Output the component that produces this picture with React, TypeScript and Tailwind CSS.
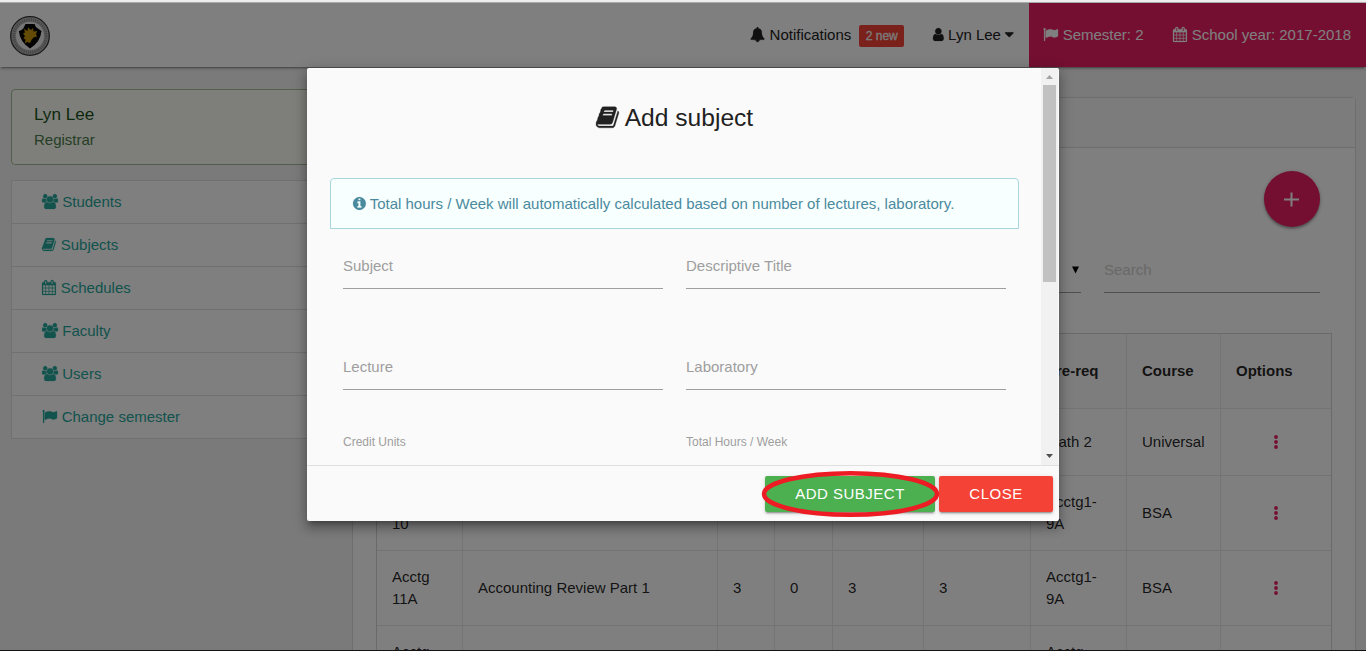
import type { ReactNode } from "react";

type IconName = "users" | "book" | "calendar" | "flag" | "user" | "bell" | "info" | "caret";

const ICONS: Record<IconName, { box: string; width: string; d: string }> = {
  users: {
    box: "0 0 1920 1792",
    width: "w-[1.0714em]",
    d: "M593 896q-162 5-265 128h-134q-82 0-138-40.5t-56-118.5q0-353 124-353 6 0 43.5 21t97.5 42.5 119 21.5q67 0 133-23-5 37-5 66 0 139 81 256zm1071 637q0 120-73 189.5t-194 69.5h-874q-121 0-194-69.5t-73-189.5q0-53 3.5-103.5t14-109 26.5-108.5 43-97.5 62-81 85.5-53.5 111.5-20q10 0 43 21.5t73 48 107 48 135 21.5 135-21.5 107-48 73-48 43-21.5q61 0 111.5 20t85.5 53.5 62 81 43 97.5 26.5 108.5 14 109 3.5 103.5zm-1024-1277q0 106-75 181t-181 75-181-75-75-181 75-181 181-75 181 75 75 181zm704 384q0 159-112.5 271.5t-271.5 112.5-271.5-112.5-112.5-271.5 112.5-271.5 271.5-112.5 271.5 112.5 112.5 271.5zm576 225q0 78-56 118.5t-138 40.5h-134q-103-123-265-128 81-117 81-256 0-29-5-66 66 23 133 23 59 0 119-21.5t97.5-42.5 43.5-21q124 0 124 353zm-128-609q0 106-75 181t-181 75-181-75-75-181 75-181 181-75 181 75 75 181z",
  },
  book: {
    box: "64 0 1664 1792",
    width: "w-[0.9286em] mr-[0.6px]",
    d: "M1703 478q40 57 18 129l-275 906q-19 64-76.5 107.5t-122.5 43.5h-923q-77 0-148.5-53.5t-99.5-131.5q-24-67-2-127 0-4 3-27t4-37q1-8-3-21.5t-3-19.5q2-11 8-21t16.5-23.5 16.5-23.5q23-38 45-91.5t30-91.5q3-10 .5-30t-.5-28q3-11 17-28t17-23q21-36 42-92t25-90q1-9-2.5-32t.5-28q4-13 22-30.5t22-22.5q19-26 42.5-84.5t27.5-96.5q1-8-3-25.5t-2-26.5q2-8 9-18t18-23 17-21q8-12 16.5-30.5t15-35 16-36 19.5-32 26.5-23.5 36-11.5 47.5 5.5l-1 3q38-9 51-9h761q74 0 114 56t18 130l-274 906q-36 119-71.5 153.5t-128.5 34.5h-869q-27 0-38 15-11 16-1 43 24 70 144 70h923q29 0 56-15.5t35-41.5l300-987q7-22 5-57 38 15 59 43zm-1064 2q-4 13 2 22.5t20 9.5h608q13 0 25.5-9.5t16.5-22.5l21-64q4-13-2-22.5t-20-9.5h-608q-13 0-25.5 9.5t-16.5 22.5zm-83 256q-4 13 2 22.5t20 9.5h608q13 0 25.5-9.5t16.5-22.5l21-64q4-13-2-22.5t-20-9.5h-608q-13 0-25.5 9.5t-16.5 22.5z",
  },
  calendar: {
    box: "64 0 1664 1792",
    width: "w-[0.9286em] mr-[0.6px]",
    d: "M192 1664h288v-288h-288v288zm352 0h320v-288h-320v288zm-352-352h288v-320h-288v320zm352 0h320v-320h-320v320zm-352-384h288v-288h-288v288zm736 736h320v-288h-320v288zm-384-736h320v-288h-320v288zm768 736h288v-288h-288v288zm-384-352h320v-320h-320v320zm-352-864v-288q0-13-9.5-22.5t-22.5-9.5h-64q-13 0-22.5 9.5t-9.5 22.5v288q0 13 9.5 22.5t22.5 9.5h64q13 0 22.5-9.5t9.5-22.5zm736 864h288v-320h-288v320zm-384-384h320v-288h-320v288zm384 0h288v-288h-288v288zm32-480v-288q0-13-9.5-22.5t-22.5-9.5h-64q-13 0-22.5 9.5t-9.5 22.5v288q0 13 9.5 22.5t22.5 9.5h64q13 0 22.5-9.5t9.5-22.5zm384-64v1280q0 52-38 90t-90 38h-1408q-52 0-90-38t-38-90v-1280q0-52 38-90t90-38h128v-96q0-66 47-113t113-47h64q66 0 113 47t47 113v96h384v-96q0-66 47-113t113-47h64q66 0 113 47t47 113v96h128q52 0 90 38t38 90z",
  },
  flag: {
    box: "0 0 1792 1792",
    width: "w-[1em] mr-[0.5px]",
    d: "M320 256q0 72-64 110v1266q0 13-9.5 22.5t-22.5 9.5h-64q-13 0-22.5-9.5t-9.5-22.5v-1266q-64-38-64-110 0-53 37.5-90.5t90.5-37.5 90.5 37.5 37.5 90.5zm1472 64v763q0 25-12.5 38.5t-39.5 27.5q-215 116-369 116-61 0-123.5-22t-108.5-48-115.5-48-142.5-22q-192 0-464 146-17 9-33 9-26 0-45-19t-19-45v-742q0-32 31-55 21-14 79-43 236-120 421-120 107 0 200 29t219 88q38 19 88 19 54 0 117.5-21t110-47 88-47 54.5-21q26 0 45 19t19 45z",
  },
  user: {
    box: "256 0 1280 1792",
    width: "w-[0.7143em]",
    d: "M1536 1399q0 109-62.5 187t-150.5 78h-854q-88 0-150.5-78t-62.5-187q0-85 8.5-160.5t31.5-152 58.5-131 94-89 134.5-34.5q131 128 313 128t313-128q76 0 134.5 34.5t94 89 58.5 131 31.5 152 8.5 160.5zm-256-887q0 159-112.5 271.5t-271.5 112.5-271.5-112.5-112.5-271.5 112.5-271.5 271.5-112.5 271.5 112.5 112.5 271.5z",
  },
  bell: {
    box: "0 0 1792 1792",
    width: "w-[1em]",
    d: "M912 1696q0-16-16-16-59 0-101.5-42.5t-42.5-101.5q0-16-16-16t-16 16q0 73 51.5 124.5t124.5 51.5q16 0 16-16zm816-288q0 52-38 90t-90 38h-448q0 106-75 181t-181 75-181-75-75-181h-448q-52 0-90-38t-38-90q50-42 91-88t85-119.5 74.5-158.5 50-206 19.5-260q0-152 117-282.5t307-158.5q-8-19-8-39 0-40 28-68t68-28 68 28 28 68q0 20-8 39 190 28 307 158.5t117 282.5q0 139 19.5 260t50 206 74.5 158.5 85 119.5 91 88z",
  },
  info: {
    box: "128 0 1536 1792",
    width: "w-[0.857em] mr-[0.4px]",
    d: "M1152 1376v-160q0-14-9-23t-23-9h-96v-512q0-14-9-23t-23-9h-320q-14 0-23 9t-9 23v160q0 14 9 23t23 9h96v320h-96q-14 0-23 9t-9 23v160q0 14 9 23t23 9h448q14 0 23-9t9-23zm-128-896v-160q0-14-9-23t-23-9h-192q-14 0-23 9t-9 23v160q0 14 9 23t23 9h192q14 0 23-9t9-23zm640 416q0 209-103 385.5t-279.5 279.5-385.5 103-385.5-103-279.5-279.5-103-385.5 103-385.5 279.5-279.5 385.5-103 385.5 103 279.5 279.5 103 385.5z",
  },
  caret: {
    box: "384 0 1024 1792",
    width: "w-[0.5714em]",
    d: "M1408 704q0 26-19 45l-448 448q-19 19-45 19t-45-19l-448-448q-19-19-19-45t19-45 45-19h896q26 0 45 19t19 45z",
  },
};

function Icon({ name }: { name: IconName }) {
  const icon = ICONS[name];
  return (
    <svg
      viewBox={icon.box}
      fill="currentColor"
      stroke="currentColor"
      strokeWidth="24"
      className={`inline-block h-[1em] overflow-visible align-[-0.143em] ${icon.width}`}
    >
      <path d={icon.d} />
    </svg>
  );
}

function Crest() {
  return (
    <svg viewBox="0 0 40 40" className="mt-[2px] h-10 w-10">
      <circle cx="20" cy="20" r="19.3" fill="#b9b9b9" stroke="#333" strokeWidth="1.3" />
      <circle cx="20" cy="20" r="16.3" fill="none" stroke="#8a8a8a" strokeWidth="3" strokeDasharray="1.2 1" />
      <circle cx="20" cy="20" r="14" fill="#ececec" />
      <path d="M15.500 8h9l1.500 3q2.500 2 5.500 4-1 11-11.500 17.500Q10 26 8.800 15q4-1 5.200-4z" fill="#050505" />
      <path d="M14 13l3.500 2 .5-3.500 3 2.500 2-2 .500 3.500 3.500-.5-1 3.500 1 2-3.500 1-2 2.500-1.500 3-3-1-2 1.500.5-4-2-1 1.500-2.500-2-2.500 2-1z" fill="#c8960a" />
    </svg>
  );
}

const MENU: { icon: IconName; label: string }[] = [
  { icon: "users", label: "Students" },
  { icon: "book", label: "Subjects" },
  { icon: "calendar", label: "Schedules" },
  { icon: "users", label: "Faculty" },
  { icon: "users", label: "Users" },
  { icon: "flag", label: "Change semester" },
];

const HEADS = ["Code", "Descriptive Title", "Lec", "Lab", "Units", "Hours", "Pre-req", "Course", "Options"];

const ROWS: { height: string; cells: string[] }[] = [
  { height: "h-[67px]", cells: ["Math 3", "Business Mathematics", "3", "0", "3", "3", "Math 2", "Universal"] },
  { height: "h-[75px]", cells: ["Acctg 10", "Accounting Integration", "3", "0", "3", "3", "Acctg1-9A", "BSA"] },
  { height: "h-[75px]", cells: ["Acctg 11A", "Accounting Review Part 1", "3", "0", "3", "3", "Acctg1-9A", "BSA"] },
  { height: "h-[75px]", cells: ["Acctg 11B", "Accounting Review Part 2", "3", "0", "3", "3", "Acctg 11A", "BSA"] },
];

const COLS = "grid grid-cols-[86px_255px_57px_58px_91px_107px_96px_94px_110px]";

function Cell({ children, last = false }: { children: ReactNode; last?: boolean }) {
  return (
    <div className={`flex items-center px-[15px] ${last ? "" : "border-r border-[#e8e8e8]"}`}>{children}</div>
  );
}

function Dots() {
  return (
    <svg viewBox="0 0 4 14" className="ml-[38px] h-[14px] w-1" fill="#e91e63">
      <circle cx="2" cy="2" r="1.9" />
      <circle cx="2" cy="7" r="1.9" />
      <circle cx="2" cy="12" r="1.9" />
    </svg>
  );
}

function Navbar() {
  return (
    <header className="relative flex h-16 shrink-0 items-center justify-between bg-white pl-[10px] leading-[64px] text-[#212121] shadow-[0_2px_2px_0_rgba(0,0,0,0.14),0_1px_5px_0_rgba(0,0,0,0.12),0_3px_1px_-2px_rgba(0,0,0,0.2)]">
      <Crest />
      <nav className="flex h-full whitespace-nowrap">
        <span className="flex items-center pl-[15px] pr-[14px]">
          <span>
            <Icon name="bell" /> Notifications
          </span>
          <span className="ml-2 mt-[2px] flex h-[22px] w-[45px] items-center justify-center rounded-[2px] bg-[#f44336] text-[12px] text-[#f5f5f5] [-webkit-text-stroke:0.3px_#f5f5f5]">
            2 new
          </span>
        </span>
        <span className="px-[15px]">
          <Icon name="user" /> Lyn Lee <Icon name="caret" />
        </span>
        <span className="bg-[#e91e63] pl-[14.300px] pr-[15px] text-white">
          <Icon name="flag" /> Semester: 2
        </span>
        <span className="-ml-[0.500px] bg-[#e91e63] pl-[15px] pr-[15px] text-white">
          <Icon name="calendar" /> School year: 2017-2018
        </span>
      </nav>
    </header>
  );
}

function Sidebar() {
  return (
    <aside className="w-[331px] shrink-0 pt-[22px]">
      <div className="h-[76px] rounded-[4px] border border-[#a3c293] bg-[#fcfff5] pl-[22px] pt-[14px]">
        <div className="text-[17.1px] leading-[22px] text-[#1a531b]">Lyn Lee</div>
        <div className="mt-[3px] leading-[22px] text-[#4b7d4b]">Registrar</div>
      </div>
      <ul className="mt-[15px] border border-[#e0e0e0] bg-white text-[#26a69a]">
        {MENU.map((item) => (
          <li key={item.label} className="h-[43px] border-b border-[#e0e0e0] pl-[30px] leading-[42px] last:h-[42px] last:border-b-0">
            <Icon name={item.icon} /> {item.label}
          </li>
        ))}
      </ul>
    </aside>
  );
}

function SubjectPanel() {
  return (
    <section className="mt-[30px] h-[600px] w-[1004px] shrink-0 rounded-[4px] border border-[#dcdcdc] bg-white">
      <div className="h-[50px] border-b border-[#dcdcdc] bg-[#f8f8f8]" />
      <div className="flex justify-end pr-[35px] pt-[23px]">
        <button className="flex h-14 w-14 items-center justify-center rounded-full bg-[#e91e63] pr-px shadow-[0_2px_2px_0_rgba(0,0,0,0.24),0_1px_5px_0_rgba(0,0,0,0.2)]">
          <svg viewBox="0 0 15 15" className="h-[15px] w-[15px]" fill="#fff">
            <path d="M6.500 0.500h2v6h6.500v2H8.500v6h-2v-6H0v-2h6.500z" />
          </svg>
        </button>
      </div>
      <div className="ml-[51px] mt-[21px] flex gap-[23px]">
        <div className="flex h-[45px] w-[677px] items-center justify-end border-b border-[#9e9e9e] pr-[2px]">
          <svg viewBox="0 0 8 8" className="h-2 w-[7px]" fill="#000">
            <path d="M0 0h8L4 8z" />
          </svg>
        </div>
        <div className="h-[45px] w-[216px] border-b border-[#9e9e9e] leading-[43px] text-[#d1d1d1]">Search</div>
      </div>
      <div className="ml-[23px] mt-[40px] w-[956px] border border-[#d4d4d5] text-black/87">
        <div className={`${COLS} h-[74px] bg-[#fafafa] font-bold`}>
          {HEADS.map((h, i) => (
            <Cell key={h} last={i === 8}>
              {h}
            </Cell>
          ))}
        </div>
        {ROWS.map((row) => (
          <div key={row.cells[1]} className={`${COLS} ${row.height} border-t border-[#e8e8e8] leading-[22px]`}>
            {row.cells.map((c, i) => (
              <Cell key={i}>{c}</Cell>
            ))}
            <Cell last>
              <Dots />
            </Cell>
          </div>
        ))}
      </div>
    </section>
  );
}

function Field({ label }: { label: string }) {
  return <div className="h-[45px] w-[320px] border-b border-[#9e9e9e] leading-[44px] text-[#9e9e9e]">{label}</div>;
}

function AddSubjectModal() {
  return (
    <div className="absolute left-[307px] top-[68px] flex h-[453px] w-[752px] flex-col overflow-hidden rounded-[2px] bg-[#fafafa] shadow-[0_8px_10px_1px_rgba(0,0,0,0.14),0_3px_14px_2px_rgba(0,0,0,0.2),0_5px_5px_-3px_rgba(0,0,0,0.3)]">
      <div className="flex h-[397px] pr-[1px]">
        <div className="w-[734px] pl-[23px]">
          <h5 className="-ml-[22px] mt-[34px] h-8 text-center text-[24.6px] leading-8 text-[#212121]">
            <Icon name="book" /> Add subject
          </h5>
          <div className="mt-[44px] h-[51px] w-[689px] rounded-t-[4px] border border-[#a9d5de] bg-[#f8ffff] pl-[21.500px] leading-[49px] text-[#4a8a9e]">
            <Icon name="info" /> Total hours / Week will automatically calculated based on number of lectures, laboratory.
          </div>
          <div className="ml-[13px] mt-[15px] grid w-[663px] grid-cols-2 gap-x-[23px] gap-y-[56px]">
            <Field label="Subject" />
            <Field label="Descriptive Title" />
            <Field label="Lecture" />
            <Field label="Laboratory" />
          </div>
          <div className="ml-[13px] mt-[44px] grid w-[663px] grid-cols-2 gap-x-[23px] text-[12px] leading-4 text-[#9e9e9e]">
            <div>Credit Units</div>
            <div>Total Hours / Week</div>
          </div>
        </div>
        <div className="flex w-[17px] flex-col items-center justify-between bg-[#f1f1f1] pb-[7px] pt-[7px]">
          <svg viewBox="0 0 7 4" className="h-1 w-[7px]" fill="#a3a3a3">
            <path d="M3.500 0L7 4H0z" />
          </svg>
          <div className="mb-auto mt-[6px] h-[197px] w-[13px] bg-[#c1c1c1]" />
          <svg viewBox="0 0 7 4" className="h-1 w-[7px]" fill="#505050">
            <path d="M3.500 4L7 0H0z" />
          </svg>
        </div>
      </div>
      <footer className="flex h-14 justify-end gap-1 border-t border-black/10 pr-[6px] pt-[10px] tracking-[0.5px] text-white">
        <button className="h-9 w-[170px] rounded-[2px] bg-[#4caf50] shadow-[0_2px_2px_0_rgba(0,0,0,0.14),0_1px_5px_0_rgba(0,0,0,0.12),0_3px_1px_-2px_rgba(0,0,0,0.2)]">
          ADD SUBJECT
        </button>
        <button className="h-9 w-[114px] rounded-[2px] bg-[#f44336] shadow-[0_2px_2px_0_rgba(0,0,0,0.14),0_1px_5px_0_rgba(0,0,0,0.12),0_3px_1px_-2px_rgba(0,0,0,0.2)]">
          CLOSE
        </button>
      </footer>
    </div>
  );
}

export default function App() {
  return (
    <div className="relative flex h-[651px] w-[1366px] flex-col overflow-hidden bg-[#f5f5f5] font-['Liberation_Sans',Arial,sans-serif] text-[15px]">
      <div className="h-[3px] shrink-0 border-b border-[#b0b0b0] bg-[#f0f0f0]" />
      <Navbar />
      <main className="flex min-h-0 flex-1 items-start gap-[10px] pl-[11px]">
        <Sidebar />
        <SubjectPanel />
      </main>
      <div className="absolute inset-x-0 bottom-0 top-[3px] border-b border-[#151215] bg-black/50" />
      <AddSubjectModal />
      <svg viewBox="0 0 180 48" className="absolute left-[761px] top-[470px] h-12 w-[180px]" fill="none">
        <ellipse cx="89.500" cy="24" rx="86.500" ry="20.800" stroke="#ed1c24" strokeWidth="4.500" />
      </svg>
    </div>
  );
}
